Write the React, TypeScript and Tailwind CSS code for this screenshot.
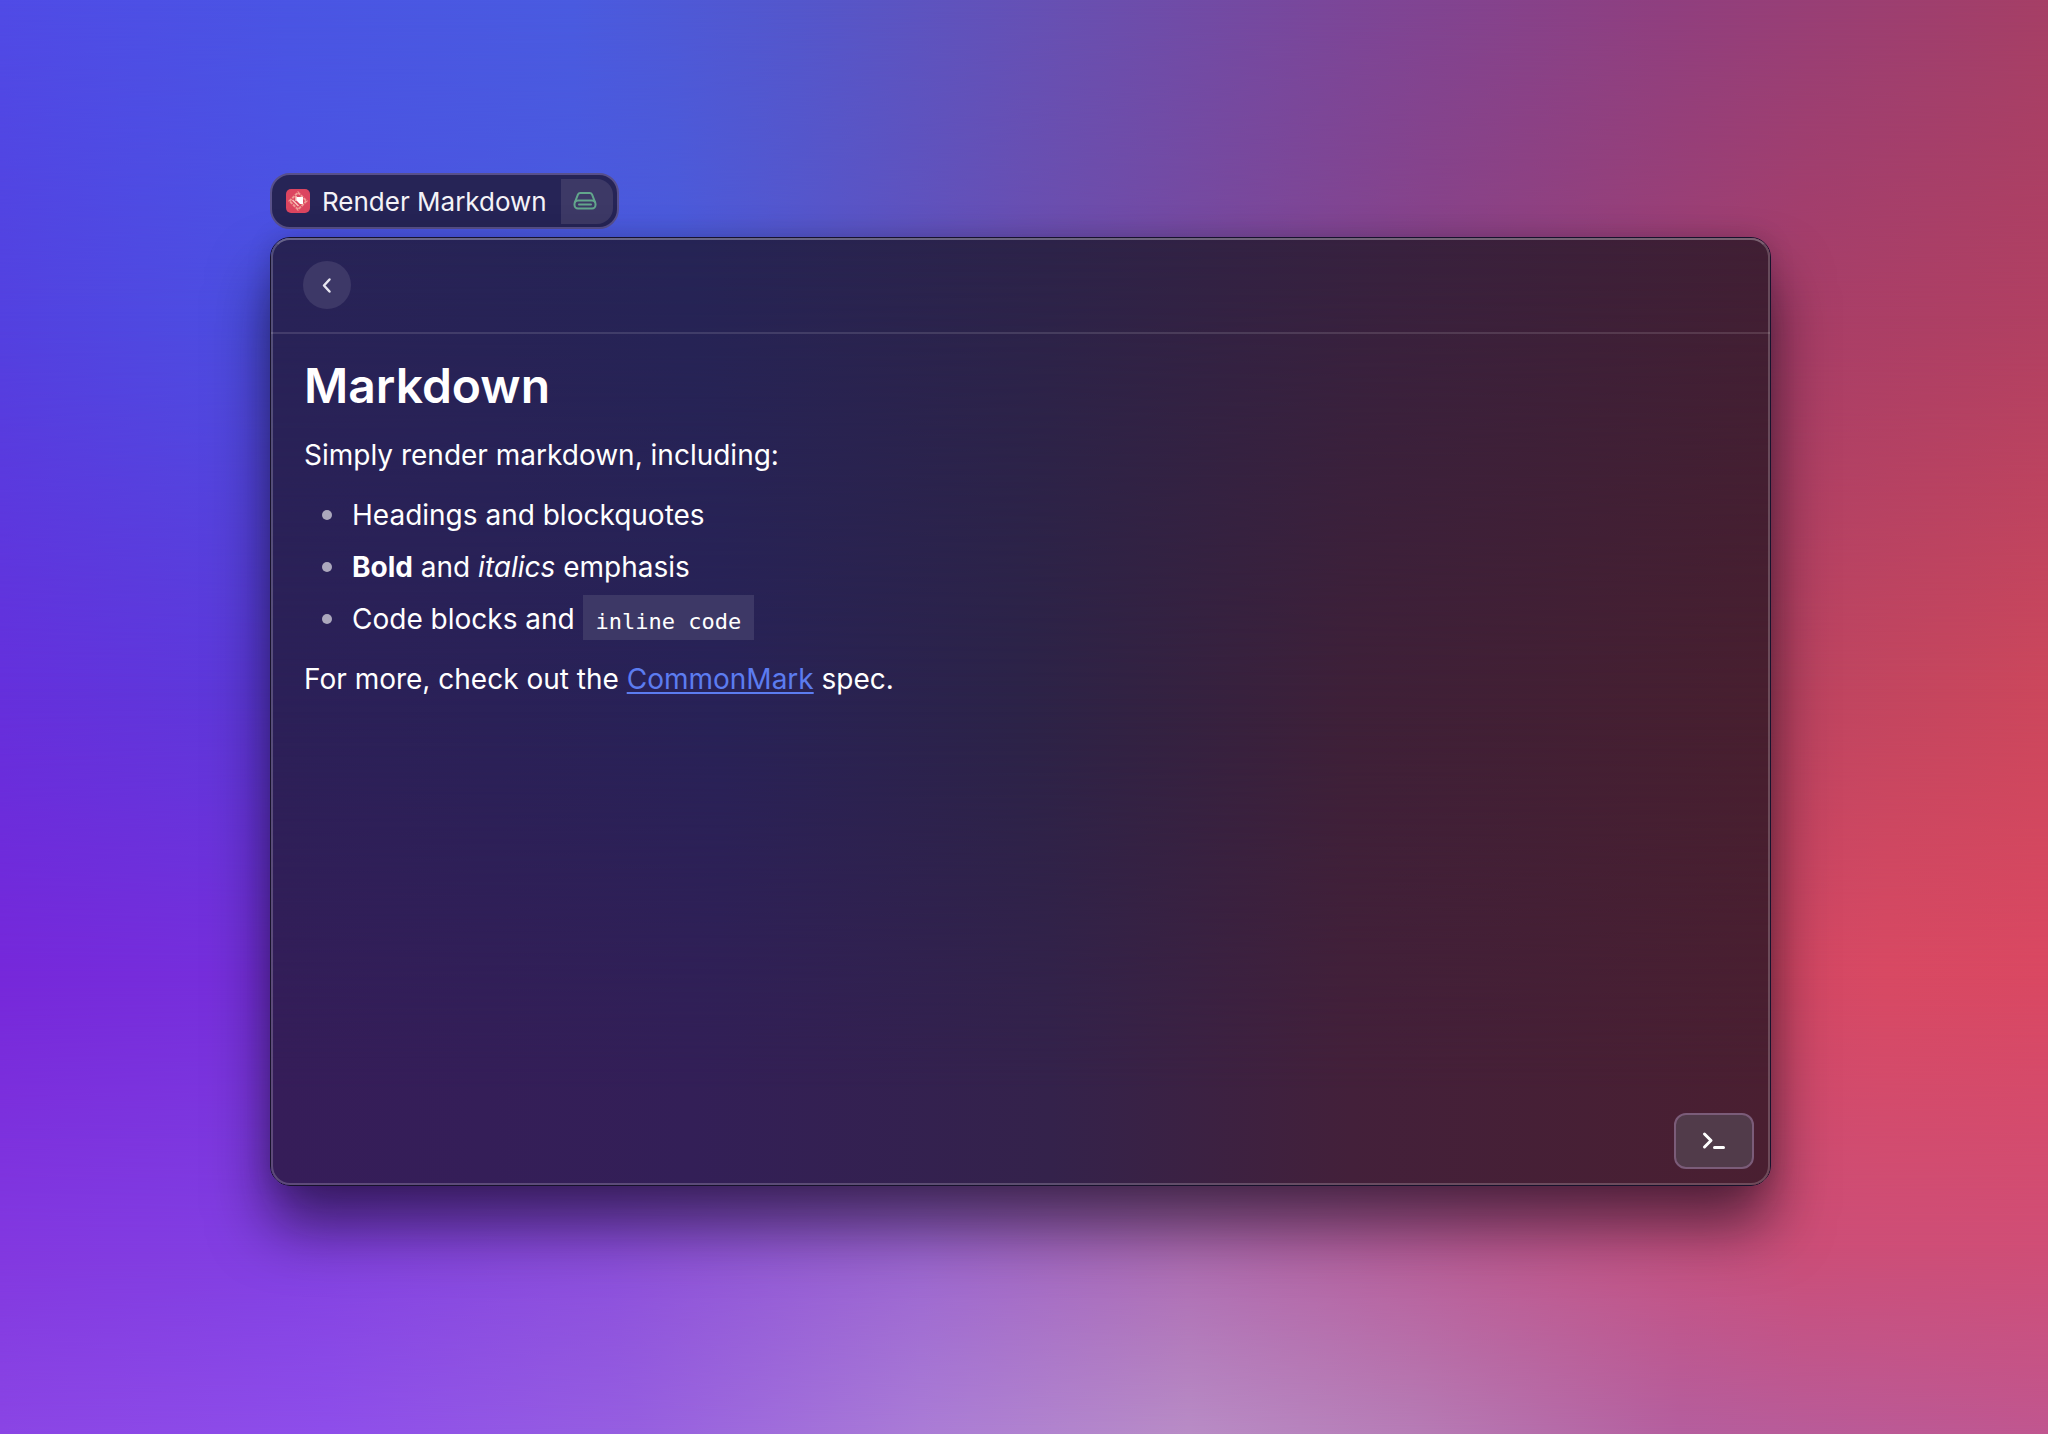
import React from "react";

function Backdrop() {
  return (
    <div className="absolute inset-0 -z-10 overflow-hidden" aria-hidden="true">
      <div className="absolute inset-0 bg-[linear-gradient(to_right,#504be6_0%,#4a55e4_14%,#4a5be0_28%,#5457cc_39%,#6850b2_52%,#7c4698_66%,#8f3f80_81%,#a63f66_100%)]" />
      <div className="absolute inset-0 bg-[linear-gradient(to_right,#5341e0_0%,#4b51e2_14%,#4a5bdc_33%,#6a4eb0_50%,#8a4286_70%,#a83e68_88%,#b14062_100%)] [mask-image:linear-gradient(to_bottom,transparent_0%,black_22%)]" />
      <div className="absolute inset-0 bg-[linear-gradient(to_right,#6530dc_0%,#5c3ada_13%,#5048c8_33%,#7a4898_55%,#b04068_80%,#c04560_90%,#cc475c_100%)] [mask-image:linear-gradient(to_bottom,transparent_22%,black_48%)]" />
      <div className="absolute inset-0 bg-[linear-gradient(to_right,#7628da_0%,#7630dc_13%,#7a40d0_33%,#9850a0_55%,#cc4668_80%,#d84963_92%,#da4862_100%)] [mask-image:linear-gradient(to_bottom,transparent_48%,black_68%)]" />
      <div className="absolute inset-0 bg-[linear-gradient(to_right,#8238e0_0%,#8240e2_14%,#8c4fdc_30%,#9c66d0_45%,#ae6cb2_58%,#bc5c94_72%,#cc4e78_88%,#d04e76_100%)] [mask-image:linear-gradient(to_bottom,transparent_68%,black_87%)]" />
      <div className="absolute inset-0 bg-[linear-gradient(to_right,#8a45e4_0%,#8e4eea_16%,#965fe0_31%,#aa7cd6_45%,#b88cc6_58%,#b67cb6_69%,#b45e9e_82%,#c0568f_100%)] [mask-image:linear-gradient(to_bottom,transparent_87%,black_100%)]" />
    </div>
  );
}

function ExtensionLogo() {
  return (
    <svg width="24" height="24" viewBox="0 0 24 24" aria-hidden="true">
      <rect width="24" height="24" rx="5" fill="#dc4560" />
      <path d="M12 3.500 20.500 12 12 20.500 3.500 12Z" fill="none" stroke="#f09a94" strokeWidth="2" strokeDasharray="3 1" />
      <path d="M10 8H17V15H14L10 11Z" fill="#fff" />
      <path d="M6.500 11 12.500 17M10 7v5" fill="none" stroke="#f8c6bd" strokeWidth="1.500" />
    </svg>
  );
}

function DriveIcon() {
  return (
    <svg width="24" height="20" viewBox="0 0 24 20" fill="none" stroke="#62a68c" strokeWidth="2" strokeLinejoin="round" strokeLinecap="round" aria-hidden="true">
      <path d="M2 11 5 3.400Q5.700 2 7.200 2H16.800Q18.300 2 19 3.400L22 11" />
      <rect x="1.500" y="9.500" width="21" height="8" rx="3.500" />
      <path d="M6 13.500H18" />
    </svg>
  );
}

function Bullet() {
  return <span className="mr-5 ml-[18px] size-2.5 rounded-full bg-[#aca8bd]" />;
}

export default function App() {
  return (
    <main className="relative isolate flex min-h-screen flex-col items-stretch gap-2 pt-[173px] pr-[277px] pb-[248px] pl-[270px] font-[Inter,sans-serif] text-[28px] leading-[42px] text-white">
      <Backdrop />

      <div className="flex h-14 items-center self-start rounded-[20px] border-2 border-[#58508a] bg-[#262456] pr-1 pl-3.5">
        <ExtensionLogo />
        <span className="mt-0.5 ml-3 text-[26px] leading-8 text-[#f4f3f8]">Render Markdown</span>
        <span className="ml-3.5 flex h-[45px] w-[52px] items-center justify-center rounded-r-2xl bg-[#3d3966] pr-1">
          <DriveIcon />
        </span>
      </div>

      <section className="relative isolate flex flex-1 flex-col rounded-[20px] border border-[#17122c] shadow-[0_40px_60px_rgba(10,5,20,0.6),0_0_24px_rgba(10,5,20,0.15)]">
        <div className="absolute inset-0 -z-10 overflow-hidden rounded-[19px]" aria-hidden="true">
          <div className="absolute inset-0 bg-[linear-gradient(to_right,#282357_0%,#262455_28%,#2d2349_52%,#38213e_75%,#411f34_100%)]" />
          <div className="absolute inset-0 bg-[linear-gradient(to_right,#2c2058_0%,#282257_30%,#2c2348_50%,#3e2038_72%,#481f2f_100%)] [mask-image:linear-gradient(to_bottom,transparent,black_50%)]" />
          <div className="absolute inset-0 bg-[linear-gradient(to_right,#361d59_0%,#331f57_28%,#34224b_52%,#43203a_72%,#4a1f31_100%)] [mask-image:linear-gradient(to_bottom,transparent_50%,black_90%)]" />
        </div>
        <div className="pointer-events-none absolute inset-0 rounded-[19px] border-2 border-white/20 border-t-white/30" />

        <header className="flex h-24 items-center border-b-2 border-white/12 px-8">
          <button type="button" aria-label="Back" className="flex size-12 items-center justify-center rounded-full bg-[#3d3867]">
            <svg width="24" height="24" viewBox="0 0 24 24" fill="none" stroke="#e8e6f0" strokeWidth="2.500" strokeLinecap="round" strokeLinejoin="round" aria-hidden="true">
              <path d="M14.500 6.500 9 12.500 14.500 18.500" />
            </svg>
          </button>
        </header>

        <article className="flex flex-col gap-[18px] px-[33px] pt-[22px]">
          <h1 className="text-[48px] leading-[60px] font-semibold">Markdown</h1>
          <p>Simply render markdown, including:</p>
          <ul className="flex flex-col gap-2.5">
            <li className="flex items-center">
              <Bullet />
              <span>Headings and blockquotes</span>
            </li>
            <li className="flex items-center">
              <Bullet />
              <span>
                <strong className="font-bold">Bold</strong> and <em>italics</em> emphasis
              </span>
            </li>
            <li className="flex items-center">
              <Bullet />
              <span>
                Code blocks and{" "}
                <code className="bg-[#3d3866] px-[13px] pt-3.5 pb-1.5 font-['DejaVu_Sans_Mono',monospace] text-[22px] leading-6">inline code</code>
              </span>
            </li>
          </ul>
          <p>
            For more, check out the{" "}
            <a href="#commonmark" className="text-[#5c7cf0] underline decoration-2 underline-offset-3">CommonMark</a> spec.
          </p>
        </article>

        <footer className="mt-auto flex justify-end p-4">
          <button type="button" aria-label="Open terminal" className="flex h-14 w-20 items-center justify-center rounded-xl border-2 border-[#7b5c79] bg-[#513b4a]">
            <svg width="24" height="20" viewBox="0 0 24 20" fill="none" stroke="#fff" strokeWidth="3" strokeLinecap="round" strokeLinejoin="round" aria-hidden="true">
              <path d="M2.500 3 9 9.500 2.500 16M12.500 16.500H21.500" />
            </svg>
          </button>
        </footer>
      </section>
    </main>
  );
}
